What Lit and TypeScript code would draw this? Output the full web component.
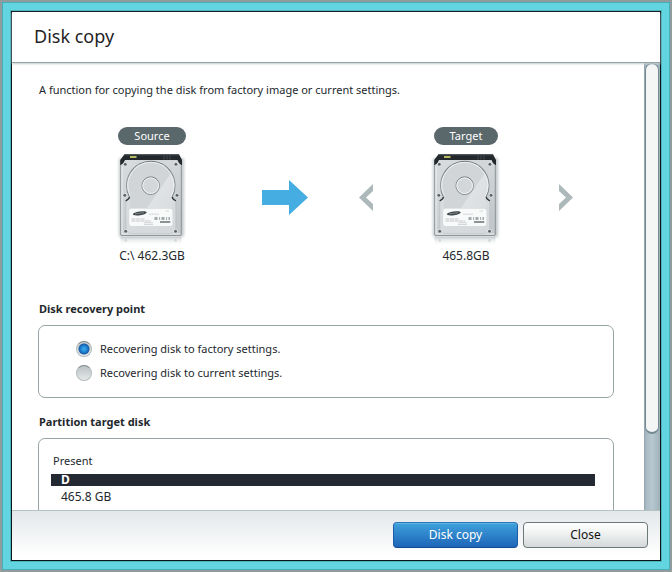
import { LitElement, html, css, svg } from "lit";
import { customElement, property, state } from "lit/decorators.js";

@customElement("disk-drive")
export class DiskDrive extends LitElement {
  static styles = css`
    :host { display: block; }
    .drive { display: block; width: 68px; height: 94px; overflow: visible; }
  `;

  render() {
    const screws = [[7.3, 14.3], [57.9, 14.3], [6.8, 45.3], [59, 45.3], [7.7, 81.3], [57.5, 81.3]];
    return html`
      <svg class="drive" viewBox="0 0 68 94" aria-hidden="true">
        <defs>
          <linearGradient id="metal" x1="0" y1="0" x2="0.5" y2="1">
            <stop offset="0" stop-color="#d9dcde" />
            <stop offset="0.5" stop-color="#d0d4d6" />
            <stop offset="1" stop-color="#c3c8cb" />
          </linearGradient>
          <linearGradient id="gloss" x1="0" y1="0" x2="1" y2="0.6">
            <stop offset="0" stop-color="#fff" stop-opacity="0.5" />
            <stop offset="1" stop-color="#fff" stop-opacity="0.15" />
          </linearGradient>
          <linearGradient id="ring" x1="0" y1="0" x2="0" y2="1">
            <stop offset="0" stop-color="#6c7478" />
            <stop offset="0.5" stop-color="#8d9599" />
            <stop offset="1" stop-color="#7d868a" />
          </linearGradient>
          <linearGradient id="mirror" x1="0" y1="0" x2="0" y2="1">
            <stop offset="0" stop-color="#aab0b3" stop-opacity="0.5" />
            <stop offset="1" stop-color="#dfe3e4" stop-opacity="0" />
          </linearGradient>
          <filter id="soft" x="-20%" y="-20%" width="140%" height="140%">
            <feGaussianBlur stdDeviation="1.6" />
          </filter>
        </defs>
        <rect x="1" y="8" width="65" height="79" rx="2" fill="#889094" opacity="0.5" filter="url(#soft)" />
        <rect x="2.5" y="87" width="61" height="8" fill="url(#mirror)" />
        <circle cx="7.7" cy="90.5" r="1.4" fill="#b4babd" opacity="0.4" />
        <circle cx="57.5" cy="90.5" r="1.4" fill="#b4babd" opacity="0.4" />
        <path d="M6.5 4.3H61L64 10V16H2.2V10Z" fill="#22282b" />
        <path d="M6.5 4.8H61" stroke="#4c5559" stroke-width="1" />
        <rect x="12" y="6" width="6.5" height="2" fill="#b5bb62" />
        <path d="M46 5.5v4M49 5.5v4M52 5.5v4" stroke="#454d51" stroke-width="1" />
        <path d="M7 10H59.5L61 13L63.8 15.5V84.5Q63.8 86 62.3 86H3.7Q2.2 86 2.2 84.5V15.5L5.5 13Z" fill="url(#metal)" />
        <path d="M2.7 16V84.5Q2.7 85.5 3.7 85.5H62.3Q63.3 85.5 63.3 84.5V16" fill="none" stroke="#8c9498" />
        <path d="M4 16.5V84H62" fill="none" stroke="#eef0f1" />
        <path d="M11.4 47.2A24.2 24.2 0 1 1 54.2 47.2L57.6 50.5V81Q57 84 54 84H12Q9 84 8.2 81V50.5Z" fill="#dcdfe1" opacity="0.75" />
        <path d="M53 23L29 58H12V48Q8 36 11 27Q19 12 33 12Q47 13 53 23Z" fill="#c6cbce" opacity="0.4" />
        <path d="M53 23L29 58H54V48Q60 36 53 23Z" fill="url(#gloss)" opacity="0.6" />
        <path d="M11.4 46.8A24.2 24.2 0 1 1 54.2 46.8" fill="none" stroke="url(#ring)" stroke-width="1.1" />
        <path d="M12.3 45.8A23 23 0 1 1 53.3 45.8" fill="none" stroke="#f3f5f5" stroke-width="0.8" />
        <path d="M11.6 47L10.6 48.7L7.7 51M54.1 47L55 48.7L57.9 51" fill="none" stroke="#2d3437" stroke-width="1.4" />
        <path d="M7.7 51V77Q8 83 13 83.5H52Q57.5 83 57.9 77V51" fill="none" stroke="#b9bfc1" stroke-width="0.6" />
        <circle cx="32.7" cy="35.7" r="8.8" fill="#d3d7d9" stroke="url(#ring)" stroke-width="1" />
        <circle cx="32.7" cy="35.7" r="7.8" fill="none" stroke="#f5f6f6" stroke-width="0.9" />
        ${screws.map(([x, y]) => svg`
          <circle cx=${x} cy=${y} r="2.1" fill="#eceeef" />
          <circle cx=${x} cy=${y} r="1.5" fill="#5c6468" />
        `)}
        <rect x="11.2" y="58.7" width="43.2" height="17.4" rx="2.5" fill="#f8f9f9" />
        <ellipse cx="21.8" cy="63.3" rx="7" ry="1.9" transform="rotate(-8 21.8 63.3)" fill="#3c4549" />
        <path d="M17 63.9L26 62.7" stroke="#aab1b4" stroke-width="0.6" />
        <path d="M31 64.2H41" stroke="#cbd0d2" stroke-width="1" stroke-dasharray="2 0.6" />
        <path d="M47.5 61H51" stroke="#d5d9da" stroke-width="1" />
        <path d="M36.5 68.5H52" stroke="#a2a9ac" stroke-width="3" stroke-dasharray="3 1.6 1 1.4" />
        <path d="M13.5 69H27M13.5 71H33" stroke="#c3c8ca" stroke-width="1" stroke-dasharray="4 0.5" />
        <path d="M26 72.8H35M26 74.6H35" stroke="#cfd3d5" stroke-width="1" />
        <path d="M42 72H52.3" stroke="#7f878b" stroke-width="1.8" />
      </svg>
    `;
  }
}

@customElement("disk-card")
export class DiskCard extends LitElement {
  @property() label = "";
  @property() caption = "";

  static styles = css`
    :host { display: block; }
    .card { margin: 0; display: flex; flex-direction: column; align-items: center; }
    .badge {
      height: 18px;
      line-height: 18px;
      padding: 0 16px;
      border-radius: 9px;
      background: #5a676b;
      color: #fff;
      margin-bottom: 5px;
    }
    .caption { font-size: 12px; line-height: 18px; margin-top: 3px; white-space: nowrap; }
  `;

  render() {
    return html`
      <figure class="card">
        <span class="badge">${this.label}</span>
        <disk-drive></disk-drive>
        <figcaption class="caption">${this.caption}</figcaption>
      </figure>
    `;
  }
}

@customElement("app-root")
export class AppRoot extends LitElement {
  @state() private mode = "factory";

  static styles = css`
    :host {
      display: block;
      height: 100vh;
      font-family: "Noto Sans", "Open Sans", sans-serif;
      font-size: 11px;
      line-height: 18px;
      color: #23282c;
    }
    * { box-sizing: border-box; }
    .frame {
      height: 100%;
      padding: 9px;
      background: #62d5e1;
      border: 2px solid #919c9d;
      box-shadow: inset 0 0 0 1px #46adb9;
    }
    .window {
      height: 100%;
      display: flex;
      flex-direction: column;
      background: #fff;
      border: 1px solid #0b1416;
      outline: 1px solid #4bb4bf;
    }
    .titlebar {
      flex: none;
      height: 51px;
      padding: 0 22px 2px;
      display: flex;
      align-items: center;
      border-bottom: 1px solid #94a4a5;
      box-shadow: 0 1px 2px #c3cdcd;
      position: relative;
    }
    .title { margin: 0; font-size: 18px; line-height: 24px; font-weight: 400; color: #1f2326; }
    .body { flex: 1; min-height: 0; display: flex; }
    .content {
      flex: 1;
      min-width: 0;
      overflow-y: auto;
      scrollbar-width: none;
      padding: 18px 30px 18px 26px;
    }
    .intro { margin: 0 0 28px 1px; }
    .disks {
      display: grid;
      grid-template-columns: 80fr 68px 76fr 46px 51fr 14px 59fr 68px 59fr 14px 41fr;
      align-items: center;
      margin-bottom: 35px;
    }
    .source { grid-column: 2; }
    .arrow { grid-column: 4; display: block; width: 46px; height: 38px; }
    .prev { grid-column: 6; }
    .target { grid-column: 8; }
    .next { grid-column: 10; }
    .step { padding: 0; border: 0; background: none; width: 14px; height: 30px; }
    .chevron { display: block; width: 14px; height: 30px; }
    .heading { margin: 0 0 7px 1px; font-size: 11px; line-height: 18px; font-weight: 700; }
    .group {
      margin: 0 0 15px;
      border: 1px solid #97a4a6;
      border-radius: 7px;
      padding: 11px 12px 12px;
    }
    .options { padding-left: 37px; }
    .option { display: flex; align-items: center; gap: 8px; height: 24px; }
    .radio {
      appearance: none;
      margin: 0;
      width: 16px;
      height: 16px;
      border-radius: 50%;
      border: 1px solid #b3babb;
      border-top-color: #7e8788;
      background: linear-gradient(#bcc3c4, #e4e8e8);
    }
    .radio:checked {
      background:
        radial-gradient(circle at 50% 50%, #3fb0ee 0, #1f86d6 3px, #1a5ba8 5px, transparent 6px),
        linear-gradient(#c3c9ca, #eceeee);
    }
    .partition { padding: 13px 18px 13px 12px; }
    .present { margin: 0 0 4px 2px; }
    .bar {
      height: 12px;
      line-height: 12px;
      padding-left: 10px;
      background: #232932;
      color: #fff;
      font-size: 12px;
      font-weight: 700;
    }
    .size { margin: 2px 0 0 10px; font-size: 12px; }
    .track {
      flex: none;
      width: 16px;
      padding: 0 1px;
      background: linear-gradient(90deg, #8fa3ac 0, #a9bac2 2px, #b7c8d0 8px, #9fb1b9 100%);
    }
    .thumb {
      height: 83%;
      background: #f4f6f6;
      border: 1px solid #748a93;
      border-bottom-width: 2px;
      border-radius: 7px;
    }
    .footer {
      flex: none;
      height: 50px;
      padding: 11px 12px 0;
      display: flex;
      align-items: flex-start;
      justify-content: flex-end;
      gap: 5px;
      border-top: 1px solid #b6c1c2;
      background: linear-gradient(#e3e8ea, #f2f4f5 50%, #fff 90%);
    }
    .button {
      width: 125px;
      height: 26px;
      padding: 0;
      border-radius: 4px;
      font: inherit;
      font-size: 12px;
      border: 1px solid #6d7878;
      background: linear-gradient(#fff, #f1f3f3 40%, #d3d8d8);
      color: #111;
    }
    .primary {
      border-color: #2a74b4 #1c5ba8 #144a93;
      background: linear-gradient(#3fa2dc, #2f86cc 45%, #1e65b8);
      box-shadow: inset 0 1px 0 #5cb5e6;
      color: #fff;
    }
  `;

  private option(value: string, text: string) {
    return html`
      <label class="option">
        <input class="radio" type="radio" name="recovery" .checked=${this.mode === value}
          @change=${() => (this.mode = value)} />
        ${text}
      </label>
    `;
  }

  render() {
    return html`
      <div class="frame">
        <main class="window">
          <header class="titlebar"><h1 class="title">Disk copy</h1></header>
          <div class="body">
            <div class="content">
              <p class="intro">A function for copying the disk from factory image or current settings.</p>
              <section class="disks">
                <disk-card class="source" label="Source" caption="C:\\ 462.3GB"></disk-card>
                <svg class="arrow" viewBox="0 0 46 38" aria-hidden="true">
                  <path d="M0 13H27V3L46 20.5L27 38V28H0Z" fill="#45ade1" />
                </svg>
                <button class="step prev" aria-label="Previous disk">
                  <svg class="chevron" viewBox="0 0 14 30"><path d="M14 3V10L7 16.5L14 23V30L0 16.5Z" fill="#adb8bb" /></svg>
                </button>
                <disk-card class="target" label="Target" caption="465.8GB"></disk-card>
                <button class="step next" aria-label="Next disk">
                  <svg class="chevron" viewBox="0 0 14 30"><path d="M0 3V10L7 16.5L0 23V30L14 16.5Z" fill="#adb8bb" /></svg>
                </button>
              </section>
              <h2 class="heading">Disk recovery point</h2>
              <div class="group options" role="radiogroup" aria-label="Disk recovery point">
                ${this.option("factory", "Recovering disk to factory settings.")}
                ${this.option("current", "Recovering disk to current settings.")}
              </div>
              <h2 class="heading">Partition target disk</h2>
              <div class="group partition">
                <p class="present">Present</p>
                <div class="bar">D</div>
                <p class="size">465.8 GB</p>
              </div>
            </div>
            <div class="track"><div class="thumb"></div></div>
          </div>
          <footer class="footer">
            <button class="button primary">Disk copy</button>
            <button class="button">Close</button>
          </footer>
        </main>
      </div>
    `;
  }
}
